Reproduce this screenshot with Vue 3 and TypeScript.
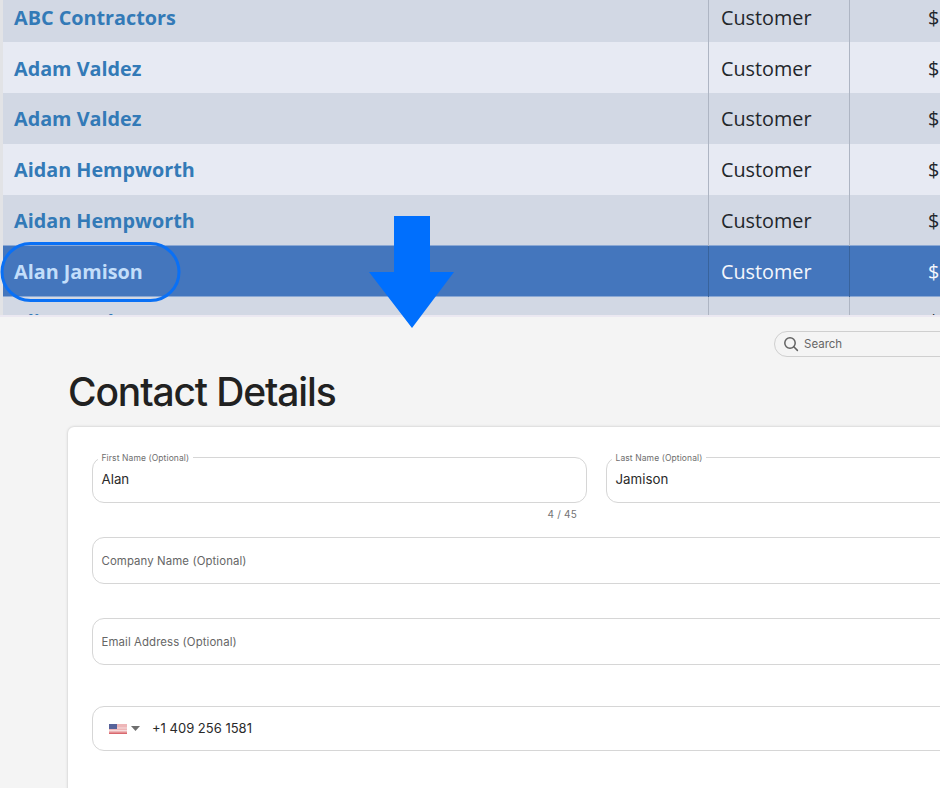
<script setup lang="ts">
interface Row { name: string; selected?: boolean }
const rows: Row[] = [
  { name: 'ABC Contractors' },
  { name: 'Adam Valdez' },
  { name: 'Adam Valdez' },
  { name: 'Aidan Hempworth' },
  { name: 'Aidan Hempworth' },
  { name: 'Alan Jamison', selected: true },
  { name: 'Alice Jacobs' },
]
</script>

<template>
  <div class="page">
    <section class="table-shot">
      <div v-for="(row, i) in rows" :key="i" class="row" :class="{ selected: row.selected }">
        <div class="name">{{ row.name }}</div>
        <div class="type">Customer</div>
        <div class="amount">$</div>
      </div>
    </section>

    <section class="details">
      <div class="search">
        <svg width="16" height="16" viewBox="0 0 16 16" fill="none" stroke="#626262" stroke-width="1.5" stroke-linecap="round">
          <circle cx="7" cy="7" r="5.200" />
          <path d="M10.800 10.800 14.400 14.400" />
        </svg>
        <span>Search</span>
      </div>
      <h1>Contact Details</h1>
      <div class="card">
        <div class="name-fields">
          <div class="col">
            <div class="field filled">
              <label>First Name (Optional)</label>
              <span>Alan</span>
            </div>
            <div class="counter">4 / 45</div>
          </div>
          <div class="col wide">
            <div class="field filled">
              <label>Last Name (Optional)</label>
              <span>Jamison</span>
            </div>
          </div>
        </div>
        <div class="field company"><span class="placeholder">Company Name (Optional)</span></div>
        <div class="field email"><span class="placeholder">Email Address (Optional)</span></div>
        <div class="field phone">
          <svg class="flag" width="18" height="10" viewBox="0 0 18 10">
            <rect width="18" height="10" fill="#eeb6b8" />
            <rect y="3.500" width="18" height="1" fill="#f6dcdc" />
            <rect y="6" width="18" height="1" fill="#f6dcdc" />
            <rect y="8.500" width="18" height="1.500" fill="#d9686e" />
            <rect width="8" height="5" fill="#57639a" />
          </svg>
          <svg class="caret" width="9" height="5" viewBox="0 0 9 5"><path d="M0 0h9L4.500 5z" fill="#6f6f6f" /></svg>
          <span class="tel">+1 409 256 1581</span>
        </div>
      </div>
    </section>

    <svg class="circle" width="181" height="61" viewBox="0 0 181 61" fill="none">
      <rect x="2" y="1.500" width="177" height="57" rx="28.500" stroke="#0a70f5" stroke-width="3" />
    </svg>
    <svg class="arrow" width="86" height="112" viewBox="0 0 86 112">
      <path d="M25 0h36v56h24L43 112 0 56h25z" fill="#006ffd" />
    </svg>
  </div>
</template>

<style scoped>
.page {
  position: relative;
  width: 940px;
  height: 788px;
  overflow: hidden;
  background: #f4f4f4;
  font-family: Inter, "Liberation Sans", sans-serif;
}
.table-shot {
  height: 317px;
  overflow: hidden;
  padding-left: 3px;
  background: #e2e3e6;
  border-bottom: 2px solid #ebe8f1;
  box-sizing: border-box;
  font-family: "Open Sans", "Liberation Sans", sans-serif;
}
.row {
  display: grid;
  grid-template-columns: 705px 142px 1fr;
  height: 50.900px;
  background: #e7eaf3;
  font-size: 19.800px;
  color: #22262b;
}
.row:nth-child(odd) {
  background: #d2d8e4;
}
.row:first-child {
  height: 42.300px;
}
.row:first-child > div {
  padding-bottom: 7px;
}
.row:nth-child(2) > div {
  padding-top: 1px;
}
.row:last-child > div {
  padding-bottom: 1px;
}
.row > div {
  display: flex;
  align-items: center;
  box-sizing: border-box;
}
.name {
  padding-left: 11px;
  font-weight: 700;
  color: #337ab7;
}
.type {
  padding-left: 12px;
  border-left: 1px solid #aeb5c3;
  border-right: 1px solid #aeb5c3;
}
.amount {
  justify-content: flex-start;
  padding-left: 78px;
}
.row.selected {
  background: #4476bd;
  color: #f4f7fc;
  box-shadow: 0 -1px 0 #8ba8d4, inset 0 -1px 0 #8ba8d4;
}
.row.selected .name {
  color: #c3defa;
}
.row.selected .type {
  border-color: #38639c;
}
.details {
  padding: 14px 0 0 68px;
}
.search {
  display: flex;
  align-items: center;
  gap: 5px;
  box-sizing: border-box;
  width: 240px;
  height: 26px;
  margin-left: 706px;
  padding-left: 8px;
  border: 1px solid #cfcfcf;
  border-radius: 13px;
  font-size: 11.500px;
  color: #666;
}
h1 {
  margin: 13px 0 13px;
  font-size: 39px;
  line-height: 44px;
  font-weight: 500;
  letter-spacing: -1.150px;
  color: #212121;
}
.card {
  width: 920px;
  height: 400px;
  box-sizing: border-box;
  padding: 30px 24px;
  background: #fff;
  border-radius: 6px;
  box-shadow: 0 0 3px rgba(0, 0, 0, 0.22);
}
.name-fields {
  display: flex;
  gap: 19px;
}
.col {
  flex: 0 0 495px;
}
.col.wide {
  flex: 0 0 400px;
}
.field {
  position: relative;
  display: flex;
  align-items: center;
  box-sizing: border-box;
  height: 46px;
  padding-left: 8.500px;
  border: 1px solid #d6d6d6;
  border-radius: 12px;
  background: #fff;
  font-size: 13.300px;
  color: #2a2a2a;
}
.field label {
  position: absolute;
  top: -5px;
  left: 4.500px;
  padding: 0 4px;
  background: #fff;
  font-size: 8.500px;
  line-height: 10px;
  letter-spacing: 0.1px;
  color: #6e6e6e;
}
.field.filled > span {
  margin-bottom: 2px;
}
.counter {
  margin-top: 5px;
  padding-right: 10px;
  text-align: right;
  font-size: 10px;
  line-height: 12px;
  letter-spacing: 0.2px;
  color: #747474;
}
.company,
.email,
.phone {
  width: 1000px;
}
.company {
  height: 47px;
  margin-top: 17px;
}
.email {
  height: 47px;
  margin-top: 34px;
}
.phone {
  margin-top: 41px;
  height: 45px;
  padding-left: 16px;
}
.placeholder {
  font-size: 11.400px;
  letter-spacing: 0.1px;
  color: #666;
}
.flag {
  margin-right: 4px;
}
.caret {
  margin-right: 12px;
}
.tel {
  margin-bottom: 1px;
  font-size: 13px;
  color: #2a2a2a;
}
.circle {
  position: absolute;
  left: 0;
  top: 242px;
}
.arrow {
  position: absolute;
  left: 369px;
  top: 216px;
}
</style>
<style>
html, body { margin: 0; overflow: hidden; }
</style>
